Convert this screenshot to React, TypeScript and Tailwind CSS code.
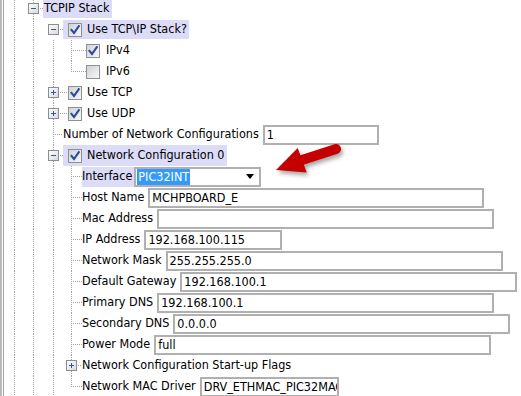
import { useId, type ReactNode } from "react";

// tree guide drawing for one row; all x values are page coordinates
type GutterProps = {
  end: number;
  full?: number[];
  top?: number[];
  leg?: [number, number];
  box?: { x: number; open: boolean };
};

function Gutter({ end, full = [], top = [], leg, box }: GutterProps) {
  const id = useId();
  return (
    <svg width={end - 4} height={21} className="flex-none" shapeRendering="crispEdges">
      <defs>
        <linearGradient id={id} x1="0" y1="0" x2="1" y2="1">
          <stop offset="0" stopColor="#ffffff" />
          <stop offset="1" stopColor="#d4d8de" />
        </linearGradient>
      </defs>
      <g transform="translate(-4 0)">
        <g stroke="#a3a3a3" strokeDasharray="1 1">
          {full.map((x) => (
            <line key={"f" + x} x1={x + 0.5} x2={x + 0.5} y1={0} y2={21} />
          ))}
          {top.map((x) => (
            <line key={"t" + x} x1={x + 0.5} x2={x + 0.5} y1={0} y2={11} />
          ))}
          {leg && <line x1={leg[0]} x2={leg[1]} y1={10.5} y2={10.5} />}
        </g>
        {box && (
          <g>
            <rect x={box.x - 4.5} y={5.5} width={10} height={10} fill={`url(#${id})`} stroke="#8d8d8d" />
            <line x1={box.x - 2} x2={box.x + 3} y1={10.5} y2={10.5} stroke="#3b5687" />
            {!box.open && <line x1={box.x + 0.5} x2={box.x + 0.5} y1={8} y2={13} stroke="#3b5687" />}
          </g>
        )}
      </g>
    </svg>
  );
}

function Check({ checked }: { checked: boolean }) {
  return (
    <span className="flex h-[14px] w-[14px] flex-none items-center justify-center border border-[#8e8f8f] bg-[linear-gradient(135deg,#cfd3d8,#f7f7f7)] p-[1px]">
      {checked && (
        <svg width="10" height="10" viewBox="0 0 10 10">
          <path d="M1.5 5 L4 8 L8.8 1.2" fill="none" stroke="#2a4a9b" strokeWidth="2.1" strokeLinecap="square" />
        </svg>
      )}
    </span>
  );
}

function Field({ className, value }: { className: string; value: string }) {
  return (
    <div
      className={`h-[20px] flex-none overflow-hidden whitespace-nowrap border-2 border-[#b0b0b0] bg-white pl-[2px] leading-[16px] ${className}`}
    >
      {value}
    </div>
  );
}

function Row({ children }: { children: ReactNode }) {
  return <div className="flex h-[21px] items-center whitespace-nowrap">{children}</div>;
}

const L = [14, 33];
const L2 = [14, 33, 53];
const L3 = [14, 33, 53, 71];

export default function App() {
  return (
    <div className="relative flex h-[396px] w-[521px] overflow-hidden bg-white font-['DejaVu_Sans_Condensed','DejaVu_Sans',sans-serif] text-[12.5px] text-black">
      <div className="h-full w-[4px] flex-none border-l-2 border-r border-l-[#b9b9b9] border-r-[#a3a3a3]" />

      <div className="-mt-[2px] flex flex-1 flex-col">
        <Row>
          <Gutter end={43} full={L} leg={[38, 43]} box={{ x: 33, open: true }} />
          <span className="flex h-[19px] items-center bg-[#dcdcf8] pl-[1px] pr-[2px]">TCPIP Stack</span>
        </Row>
        <Row>
          <Gutter end={63} full={L} top={[]} leg={[58, 63]} box={{ x: 53, open: true }} />
          <span className="flex h-[19px] items-center gap-[5px] bg-[#dcdcf8] pl-[5px] pr-[2px]">
            <Check checked />
            Use TCP\IP Stack?
          </span>
        </Row>
        <Row>
          <Gutter end={86} full={L3} leg={[71, 86]} />
          <Check checked />
          <span className="ml-[6px]">IPv4</span>
        </Row>
        <Row>
          <Gutter end={86} full={L2} top={[71]} leg={[71, 86]} />
          <Check checked={false} />
          <span className="ml-[6px]">IPv6</span>
        </Row>
        <Row>
          <Gutter end={68} full={L2} leg={[58, 68]} box={{ x: 53, open: false }} />
          <Check checked />
          <span className="ml-[5px]">Use TCP</span>
        </Row>
        <Row>
          <Gutter end={68} full={L2} leg={[58, 68]} box={{ x: 53, open: false }} />
          <Check checked />
          <span className="ml-[5px]">Use UDP</span>
        </Row>
        <Row>
          <Gutter end={63} full={L2} leg={[53, 63]} />
          <span>Number of Network Configurations</span>
          <Field className="ml-[4px] w-[116px]" value="1" />
        </Row>
        <Row>
          <Gutter end={63} full={L2} leg={[58, 63]} box={{ x: 53, open: true }} />
          <span className="flex h-[21px] items-center gap-[5px] bg-[#dcdcf8] pl-[5px] pr-[2px]">
            <Check checked />
            Network Configuration 0
          </span>
        </Row>
        <Row>
          <Gutter end={82} full={L3} leg={[71, 82]} />
          <span className="flex h-[20px] items-center bg-[#dcdcf8] pr-[2px]">Interface</span>
          <div className="flex h-[20px] w-[127px] flex-none items-center border-2 border-[#b0b0b0] bg-white pl-[1px] pr-[5px]">
            <span className="bg-[#3399ff] px-[1px] leading-[16px] text-white">PIC32INT</span>
            <span className="ml-auto h-0 w-0 border-x-[4px] border-t-[5px] border-x-transparent border-t-black" />
          </div>
        </Row>
        <Row>
          <Gutter end={82} full={L3} leg={[71, 82]} />
          <span>Host Name</span>
          <Field className="ml-[4px] w-[336px]" value="MCHPBOARD_E" />
        </Row>
        <Row>
          <Gutter end={82} full={L3} leg={[71, 82]} />
          <span>Mac Address</span>
          <Field className="ml-[4px] w-[337px]" value="" />
        </Row>
        <Row>
          <Gutter end={82} full={L3} leg={[71, 82]} />
          <span>IP Address</span>
          <Field className="ml-[4px] w-[138px]" value="192.168.100.115" />
        </Row>
        <Row>
          <Gutter end={82} full={L3} leg={[71, 82]} />
          <span>Network Mask</span>
          <Field className="ml-[4px] w-[337px]" value="255.255.255.0" />
        </Row>
        <Row>
          <Gutter end={82} full={L3} leg={[71, 82]} />
          <span>Default Gateway</span>
          <Field className="ml-[4px] w-[337px]" value="192.168.100.1" />
        </Row>
        <Row>
          <Gutter end={82} full={L3} leg={[71, 82]} />
          <span>Primary DNS</span>
          <Field className="ml-[4px] w-[337px]" value="192.168.100.1" />
        </Row>
        <Row>
          <Gutter end={82} full={L3} leg={[71, 82]} />
          <span>Secondary DNS</span>
          <Field className="ml-[4px] w-[337px]" value="0.0.0.0" />
        </Row>
        <Row>
          <Gutter end={82} full={L3} leg={[71, 82]} />
          <span>Power Mode</span>
          <Field className="ml-[4px] w-[337px]" value="full" />
        </Row>
        <Row>
          <Gutter end={82} full={L3} leg={[76, 82]} box={{ x: 71, open: false }} />
          <span>Network Configuration Start-up Flags</span>
        </Row>
        <Row>
          <Gutter end={82} full={L2} top={[71]} leg={[71, 82]} />
          <span>Network MAC Driver</span>
          <Field className="ml-[4px] w-[139px]" value="DRV_ETHMAC_PIC32MACObject" />
        </Row>
      </div>

      {/* red callout arrow pointing at the Interface combo */}
      <svg
        className="pointer-events-none absolute left-[268px] top-[138px] drop-shadow-[2px_3px_2px_rgba(0,0,0,0.35)]"
        width="84"
        height="48"
        viewBox="0 0 84 48"
      >
        <line x1="34" y1="22" x2="68" y2="11" stroke="#c40000" strokeWidth="10" strokeLinecap="round" />
        <polygon points="8,32 29.7,10 38.7,34.4" fill="#c40000" />
      </svg>
    </div>
  );
}
